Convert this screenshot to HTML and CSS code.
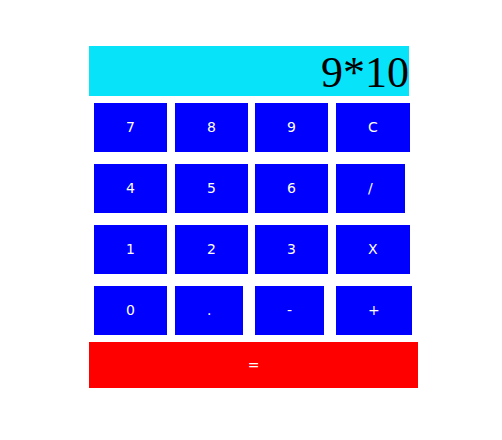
FILE: index.html
```html
<html>
<head>
    <title>Calculator</title>
    <meta charset="utf-8">
    <link rel="stylesheet" href="styles.css">
</head>
<body>
    <div class="calc">
        <div class="display" id="display">9*10</div>
        <div class="keys">
            <button class="key">7</button>
            <button class="key">8</button>
            <button class="key">9</button>
            <button class="key">C</button>
            <button class="key">4</button>
            <button class="key">5</button>
            <button class="key">6</button>
            <button class="key">/</button>
            <button class="key">1</button>
            <button class="key">2</button>
            <button class="key">3</button>
            <button class="key">X</button>
            <button class="key">0</button>
            <button class="key">.</button>
            <button class="key">-</button>
            <button class="key">+</button>
        </div>
        <button class="equals">=</button>
    </div>
</body>
</html>
```

FILE: styles.css
```css
/* Reset some default styles */
body, button {
    margin: 0;
    padding: 0;
}

body {
    background-color: #fff;
    font-family: "DejaVu Sans", Verdana, sans-serif;
}

.calc {
    padding: 46px 0 0 89px;
}

.display {
    width: 320px;
    height: 50px;
    line-height: 53px;
    background-color: #07e3f8;
    color: #000;
    text-align: right;
    font-family: "Liberation Serif", "Times New Roman", serif;
    font-size: 44px;
    overflow: hidden;
}

.keys {
    display: grid;
    grid-template-columns: 81px 80px 81px auto;
    row-gap: 12px;
    width: 330px;
    margin-top: 7px;
    padding-left: 5px;
    justify-items: start;
}

.key {
    padding: 16px 32px;
    line-height: 17px;
    height: 49px;
    background-color: #0000ff;
    color: #fff;
    font-family: "DejaVu Sans", Verdana, sans-serif;
    font-size: 14px;
    border: none;
}

.equals {
    display: block;
    width: 329px;
    height: 46px;
    margin-top: 7px;
    background-color: #ff0000;
    color: #fff;
    font-family: "DejaVu Sans", Verdana, sans-serif;
    font-size: 14px;
    border: none;
}
```
